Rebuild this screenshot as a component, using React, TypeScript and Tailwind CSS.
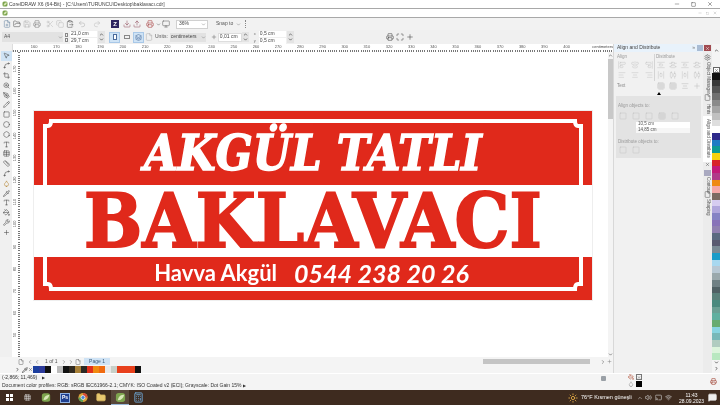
import React from 'react';
import {
  FilePlus, FolderOpen, Save, Printer, Scissors, Copy, ClipboardPaste, Undo2, Redo2, Download, Upload, Monitor, Maximize,
  ChevronDown, ChevronUp, ChevronLeft, ChevronRight, File, Layers, Grid3x3, MousePointer2, Pencil, Crop, ZoomIn, PenTool, Spline,
  Square, Circle, Hexagon, Type, Table, Ruler, Droplet, Pipette, PaintBucket, X, Minus, Plus, Settings, Volume2, Wifi, Calculator, Folder,
  AlignLeft, AlignCenter, AlignRight, AlignStartVertical, AlignCenterVertical, AlignEndVertical, AlignVerticalSpaceAround, AlignHorizontalSpaceAround,
  AlignVerticalDistributeCenter, AlignHorizontalDistributeCenter, Sun, MessageSquare, Cast, Wrench,
} from 'lucide-react';

const hTicks = [160, 170, 180, 190, 200, 210, 220, 230, 240, 250, 260, 270, 280, 290, 300, 310, 320, 330, 340, 350, 360, 370, 380, 390, 400];
const vTicks = [170, 160, 150, 140, 130, 120, 110, 100, 90, 80, 70, 60, 50];
const tools = [MousePointer2, Spline, Crop, ZoomIn, PenTool, Pencil, Square, Circle, Hexagon, Type, Table, Ruler, Spline, Droplet, Pipette, Type, PaintBucket, Wrench, Plus];
const palette = ['#111111', '#3a3a3a', '#555555', '#707070', '#8a8a8a', '#a5a5a5', '#c0c0c0', '#dedede', '#ffffff', '#2e2a8c', '#1d7cc4', '#0d9a94', '#f6d20f', '#d8232a', '#c21a79', '#b03a8a', '#ee8a14', '#f3a8a8', '#7a6a62', '#d6ccf0', '#b0a6dc', '#8583c4', '#8872b8', '#9080b0', '#5a6a80', '#5a5a70', '#7a8a94', '#1a9cc8', '#a8d8f0', '#b8c8d4', '#9aa8ac', '#708084', '#506064', '#5a807a', '#4a8a7e', '#6aa094', '#60b0a0', '#68ac70', '#88d4e0', '#78b8b8', '#b0ccc0', '#dcf4dc', '#b8e8c0'];
const docColors = ['#1c3f9e', '#2c3a9a', '#111111', '#ffffff', '#bbbbbb', '#111111', '#302a20', '#a78038', '#2c2a24', '#e0301c', '#f08a10', '#f06a10', '#e8e8e8', '#c8d0c8', '#e8401c', '#e8401c', '#e8401c', '#111111'];

function Cell({ icon: Icon, color = '#666666' }: { icon: React.ElementType; color?: string }) {
  return (
    <div className="w-[10px] h-[10px] flex items-center justify-center shrink-0">
      <Icon size={8} color={color} strokeWidth={1.5} />
    </div>
  );
}

function Spin() {
  return (
    <div className="w-[7px] h-full flex flex-col items-center justify-center bg-[#e4e4e4]">
      <ChevronUp size={5} color="#333" strokeWidth={3} />
      <ChevronDown size={5} color="#333" strokeWidth={3} />
    </div>
  );
}

function CorelIcon({ size = 10 }: { size?: number }) {
  return (
    <svg width={size} height={size} viewBox="0 0 12 12">
      <rect x="1" y="1" width="10" height="10" rx="3" fill="#7da44e" />
      <path d="M3 9 C4 4 7 3 10 3 C9 7 7 9 3 9Z" fill="#d9e8b8" />
    </svg>
  );
}

function TitleBar() {
  return (
    <div className="h-[9px] bg-white border-b border-[#a8a8a8] flex items-center pl-[2px] shrink-0">
      <CorelIcon size={6} />
      <span className="ml-[1px] text-[5px] leading-none text-[#444]">CorelDRAW X6 (64-Bit) - [C:\Users\TURUNCU\Desktop\baklavacı.cdr]</span>
      <div className="ml-auto flex items-center gap-[11px] pr-[7px]">
        <Minus size={6} color="#555" />
        <Square size={5} color="#333" strokeWidth={2} />
        <X size={6} color="#444" />
      </div>
    </div>
  );
}

function MenuBar() {
  return (
    <div className="h-[9px] bg-white border-b border-[#a8a8a8] flex items-center pl-[2px] shrink-0">
      <CorelIcon size={6} />
      <div className="ml-auto flex items-center gap-[4px] pr-[3px]">
        <Minus size={4} color="#999" />
        <Square size={3} color="#999" />
        <X size={4} color="#999" />
      </div>
    </div>
  );
}

function StandardBar() {
  return (
    <div className="h-[12px] bg-[#f2f2f2] flex items-center pl-[2px] shrink-0">
      <Cell icon={FilePlus} color="#5a7a9a" />
      <Cell icon={FolderOpen} color="#444" />
      <Cell icon={Save} color="#aaa" />
      <Cell icon={Printer} color="#777" />
      <div className="ml-[3px] flex">
        <Cell icon={Scissors} color="#bbb" />
        <Cell icon={Copy} color="#bbb" />
        <Cell icon={ClipboardPaste} color="#555" />
      </div>
      <div className="ml-[2px] flex">
        <Cell icon={Undo2} color="#aaa" />
      </div>
      <div className="ml-[5px] flex">
        <Cell icon={Redo2} color="#bbb" />
      </div>
      <div className="ml-[9px] w-[8px] h-[8px] bg-[#2d2460] flex items-center justify-center mr-[1px]">
        <span className="text-[6px] font-bold leading-none text-white font-['Liberation_Sans',sans-serif]">Z</span>
      </div>
      <div className="ml-[2px] flex">
        <Cell icon={Download} color="#8a4050" />
        <Cell icon={Upload} color="#884050" />
      </div>
      <div className="ml-[3px] flex">
        <Cell icon={Printer} color="#a03030" />
        <div className="w-[6px] flex items-center justify-center"><ChevronDown size={5} color="#333" /></div>
        <Cell icon={Monitor} color="#555" />
      </div>
      <div className="ml-[5px] w-[32px] h-[9px] bg-white border border-[#d0d0d0] flex items-center pl-[2px] text-[5px] text-[#444]">
        36%
        <ChevronDown size={5} color="#666" className="ml-auto mr-[1px]" />
      </div>
      <span className="ml-[8px] text-[5px] text-[#555]">Snap to</span>
      <ChevronDown size={5} color="#666" className="ml-[3px]" />
      <div className="ml-[4px] h-[8px] border-l border-dotted border-[#888]" />
    </div>
  );
}

function Field({ value, width = 'w-[27px]' }: { value: string; width?: string }) {
  return <div className={`${width} h-[6px] bg-white flex items-center pl-[1px] text-[5px] leading-none text-[#444]`}>{value}</div>;
}

function PropertyBar() {
  return (
    <div className="h-[14px] bg-[#f0f0f0] flex items-center pl-[2px] shrink-0">
      <div className="w-[61px] h-[10px] bg-[#e2e2e2] flex items-center pl-[2px] text-[5px] text-[#555]">
        A4
        <ChevronDown size={5} color="#666" className="ml-auto" />
      </div>
      <div className="ml-[2px] w-[4px] flex flex-col gap-[1px]">
        <div className="w-[3px] h-[4px] border border-[#888]" />
        <div className="w-[3px] h-[4px] border border-[#888]" />
      </div>
      <div className="ml-[1px] flex flex-col gap-[1px]">
        <Field value="21,0 cm" />
        <Field value="29,7 cm" />
      </div>
      <div className="h-[12px] ml-[1px]"><Spin /></div>
      <div className="ml-[4px] w-[11px] h-[11px] bg-[#cfe3f5] border border-[#a8c8e8] flex items-center justify-center">
        <div className="w-[4px] h-[6px] border border-[#4a6a9a] bg-white" />
      </div>
      <div className="ml-[3px] w-[8px] h-[11px] flex items-center justify-center">
        <div className="w-[6px] h-[4px] border border-[#888]" />
      </div>
      <div className="ml-[2px] w-[11px] h-[11px] bg-[#cfe3f5] border border-[#a8c8e8] flex items-center justify-center">
        <Layers size={7} color="#4a6a9a" />
      </div>
      <Cell icon={File} color="#aaa" />
      <span className="ml-[1px] text-[5px] text-[#555]">Units:</span>
      <div className="ml-[2px] w-[36px] h-[9px] bg-[#e2e2e2] flex items-center pl-[1px] text-[5px] text-[#444]">
        centimeters
        <ChevronDown size={5} color="#666" className="ml-auto" />
      </div>
      <Plus size={6} color="#666" className="ml-[5px]" />
      <div className="ml-[1px] w-[24px] h-[9px] bg-white border border-[#ddd] flex items-center text-[5px] text-[#444] pl-[1px]">0,01 cm</div>
      <div className="h-[10px]"><Spin /></div>
      <div className="ml-[5px] w-[5px] flex flex-col gap-[1px] text-[4px] leading-[6px] text-[#777]">
        <span>x</span>
        <span>y</span>
      </div>
      <div className="flex flex-col gap-[1px]">
        <Field value="0,5 cm" />
        <Field value="0,5 cm" />
      </div>
      <div className="h-[12px] ml-[1px]"><Spin /></div>
      <div className="ml-[91px] flex">
        <Cell icon={Printer} color="#333" />
        <Cell icon={Maximize} color="#333" />
        <Cell icon={Plus} color="#333" />
      </div>
    </div>
  );
}

function TopRuler() {
  return (
    <div className="h-[8px] flex shrink-0">
      <div className="w-[12px] bg-[#f0f0f0]" />
      <div className="flex-1 relative bg-white overflow-hidden border-l border-[#ddd]">
        <div className="flex pl-[10px] h-[6px]">
          {hTicks.map((n) => (
            <span key={n} className="w-[22.2px] shrink-0 text-[4px] leading-[6px] text-center text-[#555]">{n}</span>
          ))}
        </div>
        <div className="h-[2px] bg-[repeating-linear-gradient(90deg,#777_0_1px,transparent_1px_2.2px)]" />
        <span className="absolute right-0 top-0 bg-white text-[4px] leading-[6px] text-[#444]">centimeters</span>
      </div>
    </div>
  );
}

function ToolBox() {
  return (
    <div className="w-[12px] bg-[#f0f0f0] flex flex-col items-center shrink-0 -mt-[1px]">
      {tools.map((T, i) => (
        <div key={i} className={`w-[11px] h-[9.8px] flex items-center justify-center ${i === 0 ? 'bg-[#cfe3f5]' : ''}`}>
          <T size={7} color={i === 13 ? '#b07a20' : '#444'} strokeWidth={1.8} />
        </div>
      ))}
    </div>
  );
}

function SideRuler() {
  return (
    <div className="w-[8px] bg-white flex shrink-0 overflow-hidden">
      <div className="w-[6px] flex flex-col pt-[6px]">
        {vTicks.map((n) => (
          <span key={n} className="h-[22.2px] shrink-0 flex items-center justify-center text-[4px] leading-none text-[#555] [writing-mode:vertical-rl] rotate-180">{n}</span>
        ))}
      </div>
      <div className="w-[2px] bg-[repeating-linear-gradient(0deg,#777_0_1px,transparent_1px_2.2px)]" />
    </div>
  );
}

function Banner() {
  return (
    <div className="relative w-[558px] h-[189px] flex flex-col shrink-0 outline outline-[#eeeeee]">
      <div className="h-[74px] bg-[#e0291b] flex items-start justify-center">
        <span className="mt-[14px] text-[49px] leading-[56px] font-bold italic whitespace-nowrap text-white font-['DejaVu_Serif',serif] [-webkit-text-stroke:1.5px_white] scale-x-[0.89]">AKGÜL TATLI</span>
      </div>
      <div className="h-[72px] bg-white flex items-center justify-center">
        <span className="text-[75px] leading-[72px] font-bold whitespace-nowrap text-[#e0291b] font-['DejaVu_Serif',serif] scale-x-[0.92] [-webkit-text-stroke:2px_#e0291b]">BAKLAVACI</span>
      </div>
      <div className="h-[43px] bg-[#e0291b] flex items-center justify-center gap-[17px] pb-[11px] pr-[3px] text-white font-['Lato',sans-serif]">
        <span className="text-[22px] leading-none font-bold">Havva Akgül</span>
        <span className="text-[25px] leading-none font-bold italic">0544 238 20 26</span>
      </div>
      <svg className="absolute inset-0" width="558" height="189" viewBox="0 0 558 189" fill="none">
        <path d="M11 18 V15 H14 Q17 15 17 10 H541 Q541 15 544 15 H547 V18 V170 V173 H544 Q541 173 541 178 H17 Q17 173 14 173 H11 V170 Z" stroke="white" strokeWidth="4" />
      </svg>
    </div>
  );
}

function Canvas() {
  return (
    <div className="flex-1 bg-white overflow-hidden pt-[59px] pl-[14px] min-w-0">
      <Banner />
    </div>
  );
}

function VScroll() {
  return (
    <div className="w-[5px] bg-[#f4f4f4] flex flex-col items-center shrink-0">
      <ChevronUp size={5} color="#555" strokeWidth={3} className="mt-[1px]" />
      <div className="w-[5px] h-[60px] bg-[#c8c8c8] mt-[1px]" />
      <ChevronDown size={5} color="#555" strokeWidth={3} className="mt-auto" />
    </div>
  );
}

function Panel() {
  return (
    <div className="w-[90px] bg-[#f1f1f1] border-l border-[#d8d8d8] flex flex-col shrink-0">
      <div className="h-[8px] bg-[#e8f2fb] flex items-center pl-[3px] text-[5px] text-[#444] shrink-0">
        Align and Distribute
        <span className="ml-auto mr-[1px] text-[5px] text-[#777]">»</span>
        <div className="w-[6px] h-[6px] bg-[#a9bcd4] ml-[1px]" />
      </div>
      <div className="flex h-[29px] pt-[2px] pl-[3px] text-[4.5px] text-[#999]">
        <div className="w-[37px]">
          <div className="leading-[6px]">Align</div>
          <div className="grid grid-cols-3 gap-x-[3px]">
            <Cell icon={AlignStartVertical} color="#c4c4c4" />
            <Cell icon={AlignCenterVertical} color="#c4c4c4" />
            <Cell icon={AlignEndVertical} color="#c4c4c4" />
            <Cell icon={AlignLeft} color="#c4c4c4" />
            <Cell icon={AlignCenter} color="#c4c4c4" />
            <Cell icon={AlignRight} color="#c4c4c4" />
          </div>
        </div>
        <div className="border-l border-[#d4d4d4] pl-[1px]">
          <div className="leading-[6px]">Distribute</div>
          <div className="grid grid-cols-4 gap-x-[2px]">
            <Cell icon={AlignVerticalSpaceAround} color="#c4c4c4" />
            <Cell icon={AlignVerticalDistributeCenter} color="#c4c4c4" />
            <Cell icon={AlignVerticalSpaceAround} color="#c4c4c4" />
            <Cell icon={AlignVerticalDistributeCenter} color="#c4c4c4" />
            <Cell icon={AlignHorizontalSpaceAround} color="#c4c4c4" />
            <Cell icon={AlignHorizontalDistributeCenter} color="#c4c4c4" />
            <Cell icon={AlignHorizontalSpaceAround} color="#c4c4c4" />
            <Cell icon={AlignHorizontalDistributeCenter} color="#c4c4c4" />
          </div>
        </div>
      </div>
      <div className="h-[10px] flex items-center pl-[3px] text-[4.5px] text-[#888]">
        Text
        <div className="ml-[31px] flex gap-[2px]">
          <Cell icon={Grid3x3} color="#bbb" />
          <Cell icon={Grid3x3} color="#bbb" />
          <Cell icon={AlignCenter} color="#bbb" />
          <Cell icon={Plus} color="#bbb" />
        </div>
      </div>
      <div className="h-[5px] flex pl-[43px] items-center">
        <div className="w-0 h-0 border-x-[2px] border-x-transparent border-b-[3px] border-b-black" />
      </div>
      <div className="mx-[2px] h-[62px] bg-[#e3e3e3] px-[2px] pt-[7px] text-[4.5px] text-[#999] flex flex-col">
        <div className="leading-[6px]">Align objects to:</div>
        <div className="flex mt-[2px] gap-[3px]">
          <Cell icon={Square} color="#c0c0c0" />
          <Cell icon={Square} color="#c0c0c0" />
          <Cell icon={Square} color="#c0c0c0" />
          <Cell icon={Grid3x3} color="#c0c0c0" />
          <Cell icon={Square} color="#c0c0c0" />
        </div>
        <div className="pl-[18px] mt-[1px] flex flex-col">
          <div className="w-[54px] h-[5.5px] bg-white flex items-center pl-[2px] text-[4.5px] text-[#555]">10,5 cm</div>
          <div className="w-[54px] h-[5.5px] bg-[#f6f6f6] flex items-center pl-[2px] text-[4.5px] text-[#555]">14,85 cm</div>
        </div>
        <div className="mt-[6px] leading-[6px]">Distribute objects to:</div>
        <div className="flex gap-[3px]">
          <Cell icon={Square} color="#c0c0c0" />
          <Cell icon={Square} color="#c0c0c0" />
        </div>
      </div>
    </div>
  );
}

function DockTabs() {
  const label = 'text-[4.5px] leading-[8px] text-[#555] [writing-mode:vertical-rl] whitespace-nowrap';
  return (
    <div className="w-[9px] bg-[#ececec] flex flex-col items-center shrink-0">
      <div className="h-[8px] w-full flex items-center justify-center shrink-0">
        <div className="w-[7px] h-[6px] bg-[#a04a50] flex items-center justify-center"><X size={5} color="#fff" /></div>
      </div>
      <Settings size={7} color="#666" className="mt-[2px]" />
      <span className={`${label} mt-[1px] h-[31px]`}>Object Manager</span>
      <File size={7} color="#666" className="mt-[1px]" />
      <span className={`${label} mt-[3px] h-[10px]`}>Hints</span>
      <span className={`${label} mt-[2px] h-[46px] w-full text-center bg-white text-[#333]`}>Align and Distribute</span>
      <X size={5} color="#444" />
      <div className="w-[7px] h-[6px] bg-[#a9a9c0] mt-[3px]" />
      <span className={`${label} mt-[1px] h-[13px]`}>Contour</span>
      <File size={7} color="#666" className="mt-[1px]" />
      <span className={`${label} mt-[1px] h-[16px]`}>Shaping</span>
    </div>
  );
}

function Palette() {
  return (
    <div className="w-[8px] bg-[#f4f4f4] flex flex-col items-center shrink-0">
      <div className="h-[29px] flex flex-col items-center shrink-0">
        <ChevronUp size={5} color="#222" strokeWidth={3} className="mt-[4px]" />
        <div className="w-[7px] h-[6px] bg-white border border-[#666] mt-[14px] flex items-center justify-center">
          <X size={5} color="#444" />
        </div>
      </div>
      <div className="w-full flex-1 flex flex-col">
        {palette.map((c, i) => (
          <div key={i} className="flex-1" style={{ backgroundColor: c }} />
        ))}
      </div>
      <div className="h-[13px] flex flex-col items-center shrink-0">
        <ChevronDown size={5} color="#222" strokeWidth={3} />
        <ChevronRight size={5} color="#222" strokeWidth={3} className="mt-[1px]" />
      </div>
    </div>
  );
}

function PageTabs() {
  return (
    <div className="h-[9px] bg-[#f4f4f4] flex items-center shrink-0 pl-[18px] text-[5px] text-[#555]">
      <File size={6} color="#666" />
      <ChevronLeft size={6} color="#666" className="ml-[3px]" />
      <ChevronLeft size={6} color="#666" className="ml-[1px]" />
      <span className="ml-[5px] w-[14px]">1 of 1</span>
      <ChevronRight size={6} color="#666" className="ml-[2px]" />
      <ChevronRight size={6} color="#666" className="ml-[1px]" />
      <File size={6} color="#666" className="ml-[1px]" />
      <div className="ml-[3px] w-[26px] h-[7px] bg-[#cfe3f5] flex items-center justify-center text-[#3a5a7a]">Page 1</div>
      <div className="ml-[373px] w-[107px] h-[5px] bg-[#c4c4c4]" />
      <ChevronRight size={6} color="#555" className="ml-[10px]" />
      <Plus size={5} color="#777" className="ml-[1px]" />
    </div>
  );
}

function DocPalette() {
  return (
    <div className="h-[7px] bg-[#f4f4f4] flex items-center shrink-0 pl-[15px]">
      <ChevronRight size={5} color="#222" strokeWidth={3} />
      <Pipette size={6} color="#222" className="ml-[2px]" />
      <X size={5} color="#444" />
      <div className="flex h-[7px]">
        {docColors.map((c, i) => (
          <div key={i} className="w-[6px] h-full" style={{ backgroundColor: c }} />
        ))}
      </div>
    </div>
  );
}

function StatusBar() {
  return (
    <div className="h-[17px] bg-[#f4f4f4] border-t border-white flex shrink-0 text-[5px] text-[#333] relative">
      <div className="flex flex-col pl-[2px] w-full">
        <div className="h-[8px] flex items-center">
          (-2,866; 11,469)
          <span className="ml-[5px] text-[4px]">▶</span>
        </div>
        <div className="h-[8px] flex items-center">
          Document color profiles: RGB: sRGB IEC61966-2.1; CMYK: ISO Coated v2 (ECI); Grayscale: Dot Gain 15%
          <span className="ml-[1px] text-[4px]">▶</span>
        </div>
      </div>
      <div className="absolute left-[601px] top-[2px] w-[5px] h-[5px] bg-[#9aa0a6] rounded-[1px]" />
      <div className="absolute left-[628px] top-0 flex flex-col gap-[1px]">
        <div className="flex items-center gap-[2px]">
          <PaintBucket size={6} color="#b04a30" />
          <div className="w-[6px] h-[6px] border border-[#777] flex items-center justify-center"><X size={5} color="#444" /></div>
        </div>
        <div className="flex items-center gap-[2px]">
          <Droplet size={6} color="#888" />
          <div className="w-[6px] h-[6px] bg-black" />
        </div>
      </div>
      <Printer size={7} color="#a04030" className="absolute left-[710px] top-[4px]" />
    </div>
  );
}

function Taskbar() {
  return (
    <div className="h-[15px] bg-[#3e2b1f] flex items-center shrink-0 pl-[4px] text-white">
      <div className="w-[10px] h-[7px] flex justify-center">
        <div className="w-[7px] h-[7px] grid grid-cols-2 gap-[1px]">
          <div className="bg-white" />
          <div className="bg-white" />
          <div className="bg-white" />
          <div className="bg-white" />
        </div>
      </div>
      <div className="ml-[8px] w-[10px] flex justify-center"><Grid3x3 size={7} color="#ddd" /></div>
      <div className="ml-[9px] w-[10px] flex justify-center"><CorelIcon size={11} /></div>
      <div className="ml-[9px] w-[10px] flex justify-center">
        <div className="w-[10px] h-[10px] bg-[#1f3f8f] border border-[#8fb0e0] flex items-center justify-center text-[5px] font-bold leading-none font-['Liberation_Sans',sans-serif]">Ps</div>
      </div>
      <div className="ml-[8px] w-[10px] flex justify-center">
        <svg width="11" height="11" viewBox="0 0 12 12">
          <circle cx="6" cy="6" r="5.5" fill="#d9a13b" />
          <path d="M6 .5 A5.5 5.5 0 0 1 11.5 6 H6Z" fill="#d94c3a" />
          <path d="M.5 6 A5.5 5.5 0 0 0 6 11.5 V6Z" fill="#5aa05a" />
          <circle cx="6" cy="6" r="2.4" fill="#4a86d8" stroke="#fff" strokeWidth=".8" />
        </svg>
      </div>
      <div className="ml-[8px] w-[10px] flex justify-center"><Folder size={11} color="#d8b860" fill="#e8c870" /></div>
      <div className="ml-[5px] w-[18px] h-[15px] bg-[#58473a] flex items-center justify-center border-b border-[#9ab8d8]"><CorelIcon size={11} /></div>
      <div className="w-[18px] h-[15px] flex items-center justify-center"><Calculator size={11} color="#70a8d8" /></div>

      <Sun size={10} color="#e8b048" className="ml-[421px]" />
      <span className="ml-[3px] w-[49px] text-[5.5px] whitespace-nowrap font-['Liberation_Sans',sans-serif]">76°F Kısmen güneşli</span>
      <ChevronUp size={6} color="#ddd" className="ml-[7px]" />
      <Volume2 size={7} color="#ddd" className="ml-[2px]" />
      <Cast size={7} color="#ddd" className="ml-[3px]" />
      <Wifi size={7} color="#ddd" className="ml-[3px]" />
      <div className="ml-[7px] flex flex-col items-center text-[5px] leading-[6px] font-['Liberation_Sans',sans-serif]">
        <span>11:43</span>
        <span>28.09.2023</span>
      </div>
      <MessageSquare size={9} color="#eee" fill="#eee" className="ml-[4px]" />
    </div>
  );
}

export default function App() {
  return (
    <div className="w-[720px] h-[405px] flex flex-col overflow-hidden bg-[#f0f0f0] blur-[0.35px] font-['Liberation_Sans',sans-serif]">
      <TitleBar />
      <MenuBar />
      <StandardBar />
      <PropertyBar />
      <div className="flex flex-1 min-h-0">
        <div className="w-[613px] flex flex-col shrink-0">
          <TopRuler />
          <div className="flex flex-1 min-h-0">
            <ToolBox />
            <SideRuler />
            <Canvas />
            <VScroll />
          </div>
          <PageTabs />
          <DocPalette />
        </div>
        <Panel />
        <DockTabs />
        <Palette />
      </div>
      <StatusBar />
      <Taskbar />
    </div>
  );
}
